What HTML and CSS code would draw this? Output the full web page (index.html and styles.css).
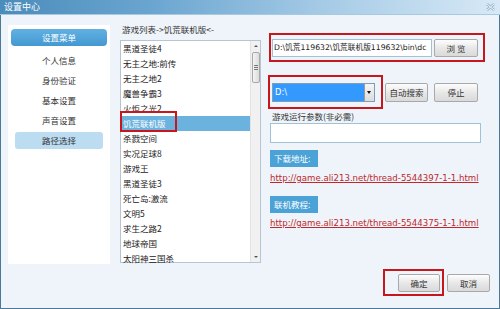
FILE: index.html
```html
<!DOCTYPE html>
<html lang="zh-CN">
<head>
<meta charset="utf-8">
<title>设置中心</title>
<link rel="stylesheet" href="styles.css">
</head>
<body>
<div class="window">
  <div class="titlebar">
    <span class="title">设置中心</span>
    <svg class="close" width="9" height="8" viewBox="0 0 9 8">
      <path d="M1 1 L8 7 M8 1 L1 7" stroke="#9db9cf" stroke-width="2.6" fill="none"/>
      <path d="M1 1 L8 7 M8 1 L1 7" stroke="#eef5fb" stroke-width="1" fill="none"/>
    </svg>
  </div>
  <div class="body">
    <div class="sidebar">
      <div class="menu-head">设置菜单</div>
      <div class="menu-item">个人信息</div>
      <div class="menu-item">身份验证</div>
      <div class="menu-item">基本设置</div>
      <div class="menu-item">声音设置</div>
      <div class="menu-item active">路径选择</div>
    </div>
    <div class="listcol">
      <div class="list-label">游戏列表-&gt;饥荒联机版&lt;-</div>
      <div class="listbox">
        <ul class="items">
          <li>黑道圣徒4</li>
          <li>无主之地:前传</li>
          <li>无主之地2</li>
          <li>魔兽争霸3</li>
          <li>火炬之光2</li>
          <li class="selected">饥荒联机版<span class="mark"></span></li>
          <li>杀戮空间</li>
          <li>实况足球8</li>
          <li>游戏王</li>
          <li>黑道圣徒3</li>
          <li>死亡岛:激流</li>
          <li>文明5</li>
          <li>求生之路2</li>
          <li>地球帝国</li>
          <li>太阳神三国杀</li>
        </ul>
        <div class="scrollbar">
          <div class="arrow up"></div>
          <div class="thumb"><span></span><span></span><span></span></div>
          <div class="track"></div>
          <div class="arrow down"></div>
        </div>
      </div>
    </div>
    <div class="right">
      <div class="redbox path-box">
        <div class="input path">D:\饥荒119632\饥荒联机版119632\bin\dc</div>
        <div class="btn browse">浏 览</div>
      </div>
      <div class="drive-row">
        <div class="redbox drive-box">
          <div class="select">
            <span class="select-text">D:\</span>
            <span class="select-arrow"></span>
          </div>
        </div>
        <div class="btn auto">自动搜索</div>
        <div class="btn stop">停止</div>
      </div>
      <div class="field-label">游戏运行参数(非必需)</div>
      <div class="input params"></div>
      <div class="badge first">下载地址:</div>
      <a class="link first-link" href="#">http://game.ali213.net/thread-5544397-1-1.html</a>
      <div class="badge second">联机教程:</div>
      <a class="link second-link" href="#">http://game.ali213.net/thread-5544375-1-1.html</a>
      <div class="footer">
        <div class="redbox ok-box">
          <div class="btn ok">确定</div>
        </div>
        <div class="btn cancel">取消</div>
      </div>
    </div>
  </div>
</div>
</body>
</html>
```
FILE: styles.css
```css
* { box-sizing: border-box; }
html, body { margin: 0; padding: 0; }
body {
  width: 500px;
  height: 309px;
  overflow: hidden;
  font-family: "Noto Sans CJK SC", "DejaVu Sans", sans-serif;
  font-size: 8.5px;
  color: #333;
  background: #eef4fa;
}
.window {
  width: 500px;
  height: 309px;
  border: 1px solid #4a7a9a;
  border-top: none;
  background: #eef4fa;
  display: flex;
  flex-direction: column;
}
.titlebar {
  height: 15px;
  margin: 0 -1px;
  display: flex;
  align-items: center;
  justify-content: space-between;
  padding: 0 5px 0 4px;
  background: linear-gradient(to right, #4b8cbb 0%, #6aa5d0 30%, #a6cbe6 65%, #d7e9f6 100%);
  border-bottom: 1px solid #a9c9e0;
}
.title {
  color: #fff;
  font-size: 9px;
  line-height: 12px;
}
.close { display: block; margin-top: -1px; }
.body {
  flex: 1;
  display: flex;
  padding: 10px 0 0 7px;
}
.sidebar {
  width: 102px;
  height: 239px;
  background: #fff;
  padding: 4px 3px 0;
  display: flex;
  flex-direction: column;
}
.menu-head {
  height: 17px;
  line-height: 17px;
  border-radius: 4px;
  background: linear-gradient(#62b1e2, #4398d0);
  color: #fff;
  text-align: center;
  margin-bottom: 6px;
}
.menu-item {
  height: 17px;
  line-height: 17px;
  margin: 0 4px 3px;
  text-align: center;
  color: #333;
  border-radius: 3px;
}
.menu-item.active { background: #bcdcf1; }
.listcol {
  margin-left: 10px;
  width: 141px;
  display: flex;
  flex-direction: column;
}
.list-label {
  line-height: 10px;
  margin: -1px 0 6px 2px;
  color: #333;
}
.listbox {
  height: 223px;
  border: 1px solid #b6c5d3;
  background: #fff;
  display: flex;
}
.items {
  list-style: none;
  margin: 0;
  padding: 0;
  flex: 1;
}
.items li {
  height: 15px;
  line-height: 15px;
  padding-left: 2px;
  color: #222;
  white-space: nowrap;
  position: relative;
}
.items li.selected {
  background: #6cb2df;
  color: #fff;
}
.mark {
  position: absolute;
  left: -1px;
  top: -5px;
  width: 57px;
  height: 21px;
  border: 2px solid #c8161d;
}
.scrollbar {
  width: 10px;
  background: #f1f1f1;
  border-left: 1px solid #e2e2e2;
  display: flex;
  flex-direction: column;
  align-items: center;
}
.arrow {
  width: 0; height: 0;
  border-left: 2px solid transparent;
  border-right: 2px solid transparent;
}
.arrow.up { border-bottom: 2px solid #555; margin-top: 4px; margin-bottom: 5px; }
.arrow.down { border-top: 2px solid #555; margin-bottom: 4px; }
.thumb {
  width: 8px;
  height: 31px;
  border: 1px solid #a8a8a8;
  border-radius: 2px;
  background: linear-gradient(to right, #f4f4f4, #dcdcdc);
  display: flex;
  flex-direction: column;
  align-items: center;
  justify-content: center;
  gap: 1px;
}
.thumb span { width: 4px; height: 1px; background: #777; }
.track { flex: 1; }
.right {
  flex: 1;
  margin-left: 7px;
  display: flex;
  flex-direction: column;
  align-items: flex-start;
}
.redbox { border: 2px solid #c8161d; display: flex; align-items: center; }
.path-box {
  margin: 8px 0 0 1px;
  width: 216px;
  height: 29px;
  padding: 4px 5px 3px 1px;
}
.input {
  background: #fff;
  border: 1px solid #9fc2d9;
  overflow: hidden;
  white-space: nowrap;
  font-family: "DejaVu Sans", "Noto Sans CJK SC", sans-serif;
  font-size: 8.3px;
  color: #222;
}
.input.path {
  width: 160px;
  height: 18px;
  line-height: 16px;
  padding-left: 1px;
  margin-right: 2px;
  font-size: 7.7px;
}
.btn {
  height: 18px;
  line-height: 16px;
  text-align: center;
  border: 1px solid #a9a9a9;
  border-radius: 2px;
  background: linear-gradient(#fdfdfd, #e6e6e6 55%, #dadada);
  color: #333;
  white-space: nowrap;
}
.btn.browse { width: 44px; }
.drive-row {
  margin-top: 13px;
  display: flex;
  align-items: center;
}
.drive-box {
  width: 115px;
  height: 34px;
  padding: 6px 6px 5px 2px;
}
.select {
  width: 103px;
  height: 19px;
  border: 1px solid #7f9db5;
  background: #3399ff;
  display: flex;
}
.select-text {
  flex: 1;
  color: #fff;
  line-height: 17px;
  padding-left: 2px;
  font-family: "DejaVu Sans", sans-serif;
  font-size: 8.3px;
}
.select-arrow {
  width: 10px;
  background: linear-gradient(#f6f6f6, #dcdcdc);
  border-left: 1px solid #9a9a9a;
  position: relative;
}
.select-arrow::after {
  content: "";
  position: absolute;
  left: 2px;
  top: 7px;
  border-left: 2.5px solid transparent;
  border-right: 2.5px solid transparent;
  border-top: 3px solid #111;
}
.btn.auto { width: 43px; height: 19px; line-height: 17px; margin-left: 2px; }
.btn.stop { width: 44px; height: 19px; line-height: 17px; margin-left: 6px; }
.field-label {
  margin: 2px 0 0 4px;
  line-height: 10px;
  color: #333;
}
.input.params {
  margin: 2px 0 0 2px;
  width: 211px;
  height: 20px;
}
.badge {
  margin-left: 2px;
  width: 48px;
  height: 17px;
  line-height: 17px;
  padding-left: 4px;
  background: #4aa2d6;
  color: #fff;
}
.badge.first { margin-top: 7px; }
.badge.second { margin-top: 12px; }
.link {
  margin-left: 2px;
  line-height: 12px;
  color: #c0282d;
  text-decoration: underline;
  font-family: "DejaVu Sans", sans-serif;
  font-size: 8.6px;
  white-space: nowrap;
}
.first-link { margin-top: 5px; }
.second-link { margin-top: 4px; }
.footer {
  margin: 40px 0 0 115px;
  display: flex;
  align-items: center;
}
.ok-box {
  width: 61px;
  height: 27px;
  padding: 3px 2px 2px 13px;
}
.btn.ok { width: 42px; }
.btn.cancel { width: 43px; margin-left: 3px; }
```
